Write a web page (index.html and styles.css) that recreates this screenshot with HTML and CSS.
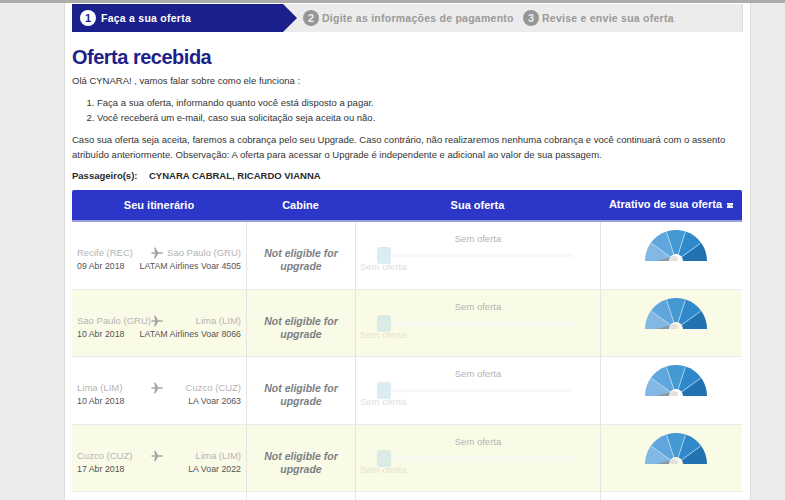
FILE: index.html
```html
<!DOCTYPE html>
<html lang="pt-BR">
<head>
<meta charset="utf-8">
<title>Oferta recebida</title>
<link rel="stylesheet" href="styles.css">
</head>
<body>
<svg class="defs" width="0" height="0" aria-hidden="true">
  <defs>
    <symbol id="plane" viewBox="0 0 12 12">
      <path d="M0 5.2h4.2L3 .4h1.2L7.3 5.2h3.4c.8 0 1.3.4 1.3.8s-.5.8-1.3.8H7.3L4.2 11.6H3l1.2-4.8H0L0 6.8l1-.8-1-.8z"/>
    </symbol>
    <symbol id="gauge" viewBox="0 0 62 31">
      <path fill="#83b8e4" d="M31 31L0 31A31 31 0 0 1 5.92 12.78z"/>
      <path fill="#5ea6dc" d="M31 31L5.92 12.78A31 31 0 0 1 21.42 1.52z"/>
      <path fill="#4499d2" d="M31 31L21.42 1.52A31 31 0 0 1 40.58 1.52z"/>
      <path fill="#2f88c9" d="M31 31L40.58 1.52A31 31 0 0 1 56.08 12.78z"/>
      <path fill="#2272b2" d="M31 31L56.08 12.78A31 31 0 0 1 62 31z"/>
      <path fill="none" stroke="#bcdcf2" stroke-width=".8" d="M31 31L6.7 13.4M31 31L21.7 2.4M31 31L40.3 2.4M31 31L55.3 13.4"/>
      <path fill="#8a97a3" d="M11 31L27 27V31z"/>
      <circle cx="31" cy="31" r="7" fill="currentColor"/>
      <ellipse cx="29" cy="29" rx="4" ry="3" fill="#e2e2dc"/>
    </symbol>
    <symbol id="pic" viewBox="0 0 6 5">
      <path fill="#f2f3fb" d="M0 0h6v5H0z"/>
      <path fill="#2c36c8" d="M0 3.4L2 1.4 3.4 2.8 4.4 2 6 3.4V2H0z" opacity=".7"/>
    </symbol>
  </defs>
</svg>
<div class="topline"></div>
<main class="panel">
  <nav class="steps">
    <div class="step step-active"><span class="num">1</span>Faça a sua oferta</div>
    <div class="step step-two"><span class="num">2</span>Digite as informações de pagamento</div>
    <div class="step step-three"><span class="num">3</span>Revise e envie sua oferta</div>
  </nav>
  <h1>Oferta recebida</h1>
  <p class="intro">Olá CYNARA! , vamos falar sobre como ele funciona :</p>
  <ol>
    <li>Faça a sua oferta, informando quanto você está disposto a pagar.</li>
    <li>Você receberá um e-mail, caso sua solicitação seja aceita ou não.</li>
  </ol>
  <p class="note">Caso sua oferta seja aceita, faremos a cobrança pelo seu Upgrade. Caso contrário, não realizaremos nenhuma cobrança e você continuará com o assento atribuído anteriormente. Observação: A oferta para acessar o Upgrade é independente e adicional ao valor de sua passagem.</p>
  <p class="pax"><span class="pax-label">Passageiro(s):</span>CYNARA CABRAL, RICARDO VIANNA</p>

  <section class="table">
    <div class="row head">
      <div>Seu itinerário</div>
      <div>Cabine</div>
      <div>Sua oferta</div>
      <div class="head-last">Atrativo de sua oferta <svg class="info"><use href="#pic"/></svg></div>
    </div>

    <div class="row body">
      <div class="route">
        <span class="city">Recife (REC)</span><svg class="plane"><use href="#plane"/></svg><span class="city city-to">Sao Paulo (GRU)</span>
        <span class="meta">09 Abr 2018</span><span class="meta meta-to">LATAM Airlines Voar 4505</span>
      </div>
      <div class="cabin">Not eligible for upgrade</div>
      <div class="offer"><div class="offer-title">Sem oferta</div><div class="track"><span class="thumb"></span></div><div class="offer-label">Sem oferta</div></div>
      <div class="attr"><svg class="gauge"><use href="#gauge"/></svg></div>
    </div>

    <div class="row body alt">
      <div class="route">
        <span class="city">Sao Paulo (GRU)</span><svg class="plane"><use href="#plane"/></svg><span class="city city-to">Lima (LIM)</span>
        <span class="meta">10 Abr 2018</span><span class="meta meta-to">LATAM Airlines Voar 8066</span>
      </div>
      <div class="cabin">Not eligible for upgrade</div>
      <div class="offer"><div class="offer-title">Sem oferta</div><div class="track"><span class="thumb"></span></div><div class="offer-label">Sem oferta</div></div>
      <div class="attr"><svg class="gauge"><use href="#gauge"/></svg></div>
    </div>

    <div class="row body">
      <div class="route">
        <span class="city">Lima (LIM)</span><svg class="plane"><use href="#plane"/></svg><span class="city city-to">Cuzco (CUZ)</span>
        <span class="meta">10 Abr 2018</span><span class="meta meta-to">LA Voar 2063</span>
      </div>
      <div class="cabin">Not eligible for upgrade</div>
      <div class="offer"><div class="offer-title">Sem oferta</div><div class="track"><span class="thumb"></span></div><div class="offer-label">Sem oferta</div></div>
      <div class="attr"><svg class="gauge"><use href="#gauge"/></svg></div>
    </div>

    <div class="row body alt">
      <div class="route">
        <span class="city">Cuzco (CUZ)</span><svg class="plane"><use href="#plane"/></svg><span class="city city-to">Lima (LIM)</span>
        <span class="meta">17 Abr 2018</span><span class="meta meta-to">LA Voar 2022</span>
      </div>
      <div class="cabin">Not eligible for upgrade</div>
      <div class="offer"><div class="offer-title">Sem oferta</div><div class="track"><span class="thumb"></span></div><div class="offer-label">Sem oferta</div></div>
      <div class="attr"><svg class="gauge"><use href="#gauge"/></svg></div>
    </div>

    <div class="row body tail">
      <div></div><div></div><div></div><div></div>
    </div>
  </section>
</main>
</body>
</html>
```
FILE: styles.css
```css
* { box-sizing: border-box; }
html, body { margin: 0; height: 500px; overflow: hidden; }
body {
  background: #ececec;
  font-family: "Liberation Sans", Arial, sans-serif;
  font-size: 9.5px;
  color: #333;
}
.defs { display: block; height: 0; }
.topline { height: 3px; background: #adadad; }
.panel {
  width: 687px;
  height: 497px;
  margin-left: 64px;
  padding: 1px 7px 0 7px;
  background: #fff;
  border-left: 1px solid #dcdcdc;
  border-right: 1px solid #dcdcdc;
  overflow: hidden;
}

/* steps */
.steps {
  display: flex;
  height: 28px;
  width: 671px;
  background: #ececec;
  border-right: 1px solid #dedede;
  font-size: 10.5px;
  font-weight: bold;
  color: #9a9a9a;
  letter-spacing: .25px;
  white-space: nowrap;
}
.step { display: flex; align-items: center; gap: 3px; }
.step-active {
  width: 225px;
  padding-left: 8px;
  gap: 5px;
  color: #fff;
  background: #1a1f8b;
  clip-path: polygon(0 0, 211px 0, 225px 50%, 211px 100%, 0 100%);
}
.step-two { margin-left: 6px; width: 220px; }
.num {
  width: 16px;
  height: 16px;
  border-radius: 50%;
  background: #969696;
  color: #ececec;
  display: flex;
  align-items: center;
  justify-content: center;
  font-size: 11px;
  letter-spacing: 0;
  flex: none;
}
.step-active .num { background: #fff; color: #1a1f8b; }

h1 {
  margin: 14px 0 5px;
  font-size: 20px;
  line-height: 23px;
  font-weight: bold;
  color: #1c2289;
  letter-spacing: -.5px;
}
p { margin: 0; }
.intro { line-height: 13px; }
ol { margin: 8px 0 7px; padding: 0 0 0 25px; line-height: 15px; }
.note { line-height: 15px; width: 668px; }
.pax { margin-top: 7px; font-weight: bold; line-height: 13px; color: #2a2a2a; }
.pax-label { display: inline-block; width: 77px; }

/* table */
.table { margin-top: 8px; width: 670px; }
.row {
  display: grid;
  grid-template-columns: 174px 109px 245px 142px;
}
.head {
  height: 32px;
  background: #2c36c8;
  border-bottom: 2px solid #9a9fd8;
  border-radius: 2px 2px 0 0;
  color: #fff;
  font-size: 11px;
  font-weight: bold;
  align-items: center;
  text-align: center;
}
.head-last { padding-bottom: 3px; white-space: nowrap; }
.info { width: 6px; height: 5px; margin-left: 2px; }
.body { height: 67.5px; border-bottom: 1px solid #eaeaea; }
.body > div { border-left: 1px solid #e4e4e4; }
.body > div:first-child { border-left: 0; }
.alt { background: #fafbe6; }
.tail { height: 20px; border-bottom: 0; }

.route {
  display: grid;
  grid-template-columns: 74px 12px 78px;
  grid-template-rows: 15px 13px;
  align-content: start;
  padding: 23px 0 0 5px;
}
.city { color: #b4b4b4; white-space: nowrap; line-height: 15px; }
.city-to { text-align: right; }
.plane { width: 12px; height: 12px; fill: #a6a6a6; margin-top: 2px; }
.meta { grid-row: 2; grid-column: 1 / -1; color: #555; font-size: 8.8px; line-height: 13px; white-space: nowrap; }
.meta-to { justify-self: end; }

.cabin {
  padding: 25px 12px 0;
  text-align: center;
  font-size: 10.5px;
  font-style: italic;
  font-weight: bold;
  color: #7a7f85;
  line-height: 13px;
}

.offer { padding: 10px 0 0 4px; }
.offer-title { padding-right: 4px; text-align: center; color: #b4b4b4; line-height: 13px; }
.track {
  position: relative;
  height: 3px;
  margin: 9px 27px 0 17px;
  background: #f8f8f6;
}
.thumb {
  position: absolute;
  left: 0;
  top: -7px;
  width: 14px;
  height: 17px;
  border-radius: 3px;
  background: #dcecf5;
}
.alt .thumb { background: #dbeae4; }
.offer-label { margin-top: 3px; color: #dedede; line-height: 13px; }
.alt .offer-label { color: #dfe3cf; }

.attr { padding: 8px 0 0 44px; }
.gauge { display: block; width: 62px; height: 31px; color: #fff; }
.alt .gauge { color: #fafbe6; }
```
